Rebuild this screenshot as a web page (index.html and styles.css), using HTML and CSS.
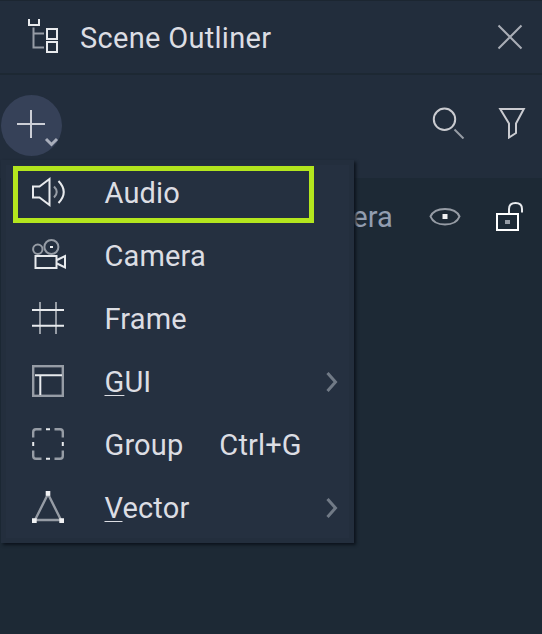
FILE: index.html
```html
<!DOCTYPE html>
<html lang="en">
<head>
<meta charset="utf-8">
<title>Scene Outliner</title>
<link rel="stylesheet" href="styles.css">
</head>
<body>
<div class="panel">
  <header class="header">
    <svg class="tree" width="36" height="36" viewBox="0 0 36 36">
      <path class="dim" d="M7.500 9.500V29.500H18M7.500 15.500H18"/>
      <path class="lit" d="M3 1V7H13V1"/>
      <rect class="lit" x="21" y="11" width="10" height="10"/>
      <rect class="lit" x="21" y="24" width="10" height="10"/>
    </svg>
    <h1 class="title">Scene Outliner</h1>
    <svg class="close" width="26" height="26" viewBox="0 0 26 26"><path class="mid" d="M1.500 1.500L24.500 24.500M24.500 1.500L1.500 24.500"/></svg>
  </header>
  <div class="toolbar">
    <div class="add">
      <svg width="61" height="61" viewBox="0 0 61 61">
        <path class="plus" d="M16 29H44M30 15V43"/>
        <path class="caret" d="M45 44L50.500 49.500L56 44"/>
      </svg>
      <div class="menu">
        <div class="item">
          <svg class="icon" width="40" height="40" viewBox="0 0 40 40">
            <path class="lit" d="M5 14.500H11.500L21.500 7V33L11.500 25.500H5Z"/>
            <path class="dim" d="M26 14.500Q31.500 20 26 25.500"/>
            <path class="lit" d="M30.500 9Q41 20 30.500 31"/>
          </svg>
          <span class="label">Audio</span>
          <div class="highlight"></div>
        </div>
        <div class="item">
          <svg class="icon" width="40" height="40" viewBox="0 0 40 40">
            <circle class="dim" cx="9.800" cy="14.300" r="4.700"/>
            <circle class="dim" cx="23.400" cy="12" r="7"/>
            <rect class="dot" x="22" y="11" width="3" height="2"/>
            <rect class="lit" x="7.500" y="21" width="21" height="12"/>
            <path class="lit" d="M29 25L37 21V32.500L29 28.500"/>
          </svg>
          <span class="label">Camera</span>
        </div>
        <div class="item">
          <svg class="icon" width="40" height="40" viewBox="0 0 40 40">
            <path class="dim" d="M12 4V36M28 4V36"/>
            <path class="lit" d="M4 12H36M4 27.700H36"/>
          </svg>
          <span class="label">Frame</span>
        </div>
        <div class="item">
          <svg class="icon" width="40" height="40" viewBox="0 0 40 40">
            <rect class="dim thick" x="5.200" y="5.200" width="29.600" height="29.600"/>
            <path class="lit" d="M7 14.300H34M12.300 14V34"/>
          </svg>
          <span class="label"><span class="key">G</span>UI</span>
          <svg class="arrow" width="12" height="20" viewBox="0 0 12 20"><path d="M1.500 1L9.500 10L1.500 19"/></svg>
        </div>
        <div class="item">
          <svg class="icon" width="40" height="40" viewBox="0 0 40 40">
            <path class="dim thick" d="M5.200 13.500V8Q5.200 5.200 8 5.200H13.500M26.500 5.200H32Q34.800 5.200 34.800 8V13.500M34.800 26.500V32Q34.800 34.800 32 34.800H26.500M13.500 34.800H8Q5.200 34.800 5.200 32V26.500"/>
            <path class="lit" d="M18 5.200H22M18 34.800H22M5.200 18V22M34.800 18V22"/>
          </svg>
          <span class="label">Group</span>
          <span class="shortcut">Ctrl+G</span>
        </div>
        <div class="item">
          <svg class="icon" width="40" height="40" viewBox="0 0 40 40">
            <path class="dim thick" d="M20 7L7 33H33Z"/>
            <path class="dot" d="M17.700 4H22.300V8.700H17.700ZM4 31.300H8.700V36H4ZM31.300 31.300H36V36H31.300Z"/>
          </svg>
          <span class="label"><span class="key">V</span>ector</span>
          <svg class="arrow" width="12" height="20" viewBox="0 0 12 20"><path d="M1.500 1L9.500 10L1.500 19"/></svg>
        </div>
      </div>
    </div>
    <div class="tools">
      <svg width="34" height="34" viewBox="0 0 34 34"><circle class="bright" cx="13.500" cy="14.300" r="10.700"/><path class="dim" d="M23.500 24.500L32.500 33.500"/></svg>
      <svg width="28" height="34" viewBox="0 0 28 34"><path class="bright" d="M2.200 4H25.800L18 18.500V28L11 32.500V18.500Z"/></svg>
    </div>
  </div>
  <div class="tree-row">
    <span class="node">Camera</span>
    <svg class="eye" width="34" height="22" viewBox="0 0 34 22"><path class="dim" d="M2.500 11.500C4.500 7 10 4 17 4S29.500 7 31.500 11.500C29.500 16.500 24 19.500 17 19.500S4.500 16.500 2.500 11.500Z"/><rect class="dot" x="14.500" y="9" width="5" height="5"/></svg>
    <svg class="lock" width="28" height="31" viewBox="0 0 28 31"><rect class="white" x="2" y="13" width="21" height="16"/><rect class="hole" x="10" y="19" width="5" height="4"/><path class="lit" d="M14 12V8Q14 2 20.500 2T27 8V11.500"/></svg>
  </div>
</div>
</body>
</html>
```
FILE: styles.css
```css
* { box-sizing: border-box; }
body {
  margin: 0;
  background: #1d2935;
  color: #dcdde3;
  font: 29px/34px Roboto, sans-serif;
  letter-spacing: 0.15px;
}
svg { display: block; flex: none; fill: none; stroke-width: 2; }
.panel { height: 634px; overflow: hidden; border-top: 1px solid #1c2631; }
.header {
  height: 74px;
  display: flex;
  align-items: flex-start;
  padding: 17px 19px 0 26px;
  background: #222d3c;
  border-bottom: 2px solid #1d2833;
}
.title { margin: 3px 0 0 18px; font: inherit; letter-spacing: 0.3px; flex: 1; }
.close { margin-top: 6px; }
.toolbar {
  height: 103px;
  display: flex;
  justify-content: space-between;
  align-items: flex-start;
  padding: 20px 16px 0 1px;
  background: #222d3c;
}
.add {
  position: relative;
  width: 61px;
  height: 61px;
  border-radius: 50%;
  background: #364158;
}
.tools { display: flex; gap: 33px; padding-top: 10px; }
.menu {
  position: absolute;
  z-index: 1;
  left: 0;
  top: 65px;
  width: 353px;
  height: 383px;
  padding: 1px 5px 4px;
  background: #253040;
  box-shadow: inset 0 0 0 5px #232e3d, 2px 2px 3px #0c131c;
}
.item {
  position: relative;
  height: 63px;
  display: flex;
  align-items: flex-start;
  padding: 11px 11px 0 22px;
}
.label { margin: 4px 0 0 36.500px; }
.key {
  text-decoration: underline 1px;
  text-underline-offset: 3px;
  text-decoration-skip-ink: none;
}
.shortcut { margin: 4px 0 0 36px; }
.arrow { margin: 11px 0 0 auto; stroke: #717a86; stroke-width: 3; }
.highlight {
  position: absolute;
  left: 7px;
  top: 5px;
  width: 301px;
  height: 57px;
  border: 5px solid #b4e61e;
}
.tree-row {
  height: 76px;
  display: flex;
  align-items: center;
  justify-content: flex-end;
  padding-right: 19px;
}
.node { color: #929db0; margin: 1px 35px 0 0; }
.eye { margin-right: 33px; }
.dim { stroke: #969ca5; }
.mid { stroke: #a9adb6; }
.bright { stroke: #cacbd0; }
.lit { stroke: #e8eaed; }
.white { stroke: #fff; }
.thick { stroke-width: 2.400; }
.plus { stroke: #ccced6; }
.caret { stroke: #a9aebb; stroke-width: 3; }
.dot { fill: #f0f1f3; }
.hole { fill: #969ca5; }
```
